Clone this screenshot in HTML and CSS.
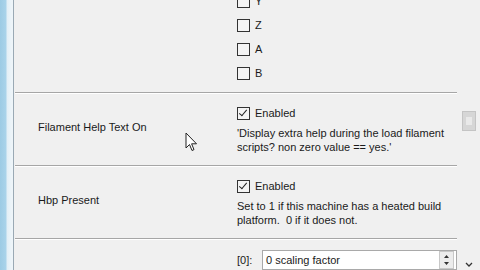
FILE: index.html
```html
<!DOCTYPE html>
<html>
<head>
  <meta charset="UTF-8">
  <title>Machine Settings</title>
  <link rel="stylesheet" href="styles.css">
</head>
<body>
<div class="window">
  <div class="frame"></div>
  <div class="panel">
    <div class="list">
      <div class="row axes">
        <div class="label"></div>
        <div class="value">
          <div class="check"><span class="box"></span>X</div>
          <div class="check"><span class="box"></span>Y</div>
          <div class="check"><span class="box"></span>Z</div>
          <div class="check"><span class="box"></span>A</div>
          <div class="check"><span class="box"></span>B</div>
        </div>
      </div>

      <div class="row">
        <div class="label">Filament Help Text On</div>
        <div class="value">
          <div class="check line"><span class="box checked"></span>Enabled</div>
          <div class="desc">'Display extra help during the load filament scripts? non zero value == yes.'</div>
        </div>
      </div>

      <div class="row">
        <div class="label">Hbp Present</div>
        <div class="value">
          <div class="check line"><span class="box checked"></span>Enabled</div>
          <div class="desc">Set to 1 if this machine has a heated build platform.&nbsp; 0 if it does not.</div>
        </div>
      </div>

      <div class="row last">
        <div class="label">Heater Calibration</div>
        <div class="value">
          <div class="field">
            <span class="index">[0]:</span>
            <div class="input">
              <span>0 scaling factor</span>
              <div class="spin">
                <svg width="7" height="12" viewBox="0 0 7 12"><path d="M3.5 1 L6 4 L1 4 Z M1 8 L6 8 L3.5 11 Z" fill="#333"/></svg>
              </div>
            </div>
          </div>
        </div>
      </div>
    </div>

    <div class="side">
      <div class="thumb"><div class="thumb-inner"></div></div>
      <svg class="chevron" width="8" height="6" viewBox="0 0 8 6"><path d="M1 1 L4 4 L7 1" fill="none" stroke="#333" stroke-width="1.3"/></svg>
    </div>
  </div>

  <svg class="cursor" width="13" height="21" viewBox="0 0 13 21">
    <path d="M1 1 L1 16 L4.5 12.5 L7 18.5 L9 17.6 L6.6 11.8 L11.5 11.8 Z" fill="#fff" stroke="#222" stroke-width="1"/>
  </svg>
</div>
</body>
</html>
```

FILE: styles.css
```css
body {
  margin: 0;
  background-color: #f0f0f0;
  font-family: "Liberation Sans", Arial, sans-serif;
  font-size: 11px;
  color: #1a1a1a;
  overflow: hidden;
}

.window {
  display: flex;
  width: 480px;
  height: 270px;
  position: relative;
  overflow: hidden;
}

.frame {
  width: 13px;
  flex-shrink: 0;
  border-right: 1px solid #9aa9b4;
  background: linear-gradient(to right, #9ccbe4 0, #a9d3ea 6px, #e2eff6 7px, #eef5f9 12px);
}

.panel {
  flex: 1;
  display: flex;
}

.list {
  width: 442px;
  margin-left: 1px;
  margin-top: -41px;
}

.row {
  display: grid;
  grid-template-columns: 199px 1fr;
  padding: 13px 0 11px 23px;
  border-bottom: 1px solid #a6a6a6;
  box-shadow: 0 1px 0 #ffffff;
}

.row .label {
  align-self: center;
  margin-bottom: 6px;
}

.axes {
  padding-top: 6px;
  padding-bottom: 7px;
}

.check {
  display: flex;
  align-items: center;
  height: 24px;
  gap: 5px;
}

.check.line {
  height: 14px;
}

.box {
  width: 11px;
  height: 11px;
  border: 1px solid #333;
  background: #f4f4f4;
  position: relative;
}

.box.checked::after {
  content: "";
  position: absolute;
  left: 3px;
  top: 0px;
  width: 3px;
  height: 7px;
  border: solid #222;
  border-width: 0 1.5px 1.5px 0;
  transform: rotate(40deg);
}

.desc {
  margin-top: 6px;
  line-height: 14px;
  width: 212px;
}

.last {
  padding-top: 11px;
  border-bottom: none;
  box-shadow: none;
}

.last .label {
  align-self: start;
  padding-top: 28px;
}

.field {
  display: flex;
  align-items: center;
  gap: 5px;
}

.index {
  width: 20px;
}

.input {
  display: flex;
  align-items: center;
  justify-content: space-between;
  width: 195px;
  height: 20px;
  box-sizing: border-box;
  border: 1px solid #a9a9a9;
  background: #fff;
  padding-left: 3px;
}

.spin {
  width: 13px;
  height: 16px;
  margin-right: 2px;
  border: 1px solid #c8c8c8;
  background: #ececec;
  display: flex;
  align-items: center;
  justify-content: center;
}

.side {
  flex: 1;
  display: flex;
  flex-direction: column;
  align-items: center;
}

.thumb {
  margin-top: 111px;
  width: 12px;
  height: 18px;
  background: #d6d6d6;
  border: 1px solid #c4c4c4;
  display: flex;
  align-items: center;
  justify-content: center;
}

.thumb-inner {
  width: 6px;
  height: 8px;
  background: #e9e9e9;
}

.chevron {
  margin-top: auto;
  margin-bottom: 2px;
}

.cursor {
  position: absolute;
  left: 185px;
  top: 132px;
}
```
